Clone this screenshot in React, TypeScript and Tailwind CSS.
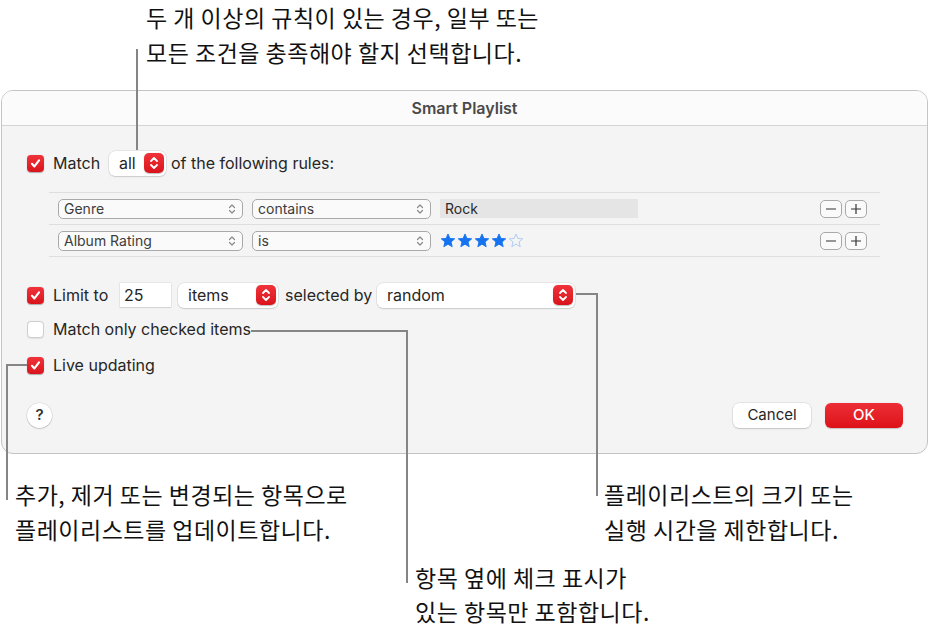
import React from 'react';

const KR = { fontFamily: '"Noto Sans CJK KR", "Noto Sans", sans-serif' };

const RedStepper = () => (
  <span className="flex h-[20px] w-[20px] items-center justify-center rounded-[5px] bg-gradient-to-b from-[#f0323a] to-[#d9121b] shadow-[0_0.5px_1px_rgba(0,0,0,0.25)]">
    <svg width="10" height="14" viewBox="0 0 10 14" fill="none" stroke="white" strokeWidth="1.8" strokeLinecap="round" strokeLinejoin="round">
      <path d="M2 5 L5 2 L8 5" />
      <path d="M2 9 L5 12 L8 9" />
    </svg>
  </span>
);

const GrayStepper = () => (
  <svg width="8" height="12" viewBox="0 0 8 12" fill="none" stroke="#8a8a8a" strokeWidth="1.2" strokeLinecap="round" strokeLinejoin="round">
    <path d="M1.5 4.5 L4 2 L6.5 4.5" />
    <path d="M1.5 7.5 L4 10 L6.5 7.5" />
  </svg>
);

const Check = ({ on }: { on: boolean }) =>
  on ? (
    <span className="flex h-[17px] w-[17px] items-center justify-center rounded-[4px] bg-gradient-to-b from-[#f0323a] to-[#d9121b] shadow-[0_0.5px_1px_rgba(0,0,0,0.3)]">
      <svg width="11" height="11" viewBox="0 0 11 11" fill="none" stroke="white" strokeWidth="2.2" strokeLinecap="round" strokeLinejoin="round">
        <path d="M2 5.8 L4.4 8.4 L9 2.4" />
      </svg>
    </span>
  ) : (
    <span className="h-[17px] w-[17px] rounded-[4px] border border-[#cfcfcf] bg-white shadow-[0_0.5px_1px_rgba(0,0,0,0.08)]" />
  );

const Select = ({ label, width }: { label: string; width: string }) => (
  <div className={`flex h-[20px] ${width} items-center justify-between rounded-[5px] border border-[#a9a9a9] bg-[#fafafa] pl-[5px] pr-[6px] text-[14px] text-[#3c3c3c]`}>
    <span>{label}</span>
    <GrayStepper />
  </div>
);

const SmallBtn = ({ kind }: { kind: 'minus' | 'plus' }) => (
  <span className="flex h-[18px] w-[22px] items-center justify-center rounded-[5px] border border-[#a9a9a9] bg-[#fafafa]">
    <svg width="12" height="12" viewBox="0 0 12 12" stroke="#333" strokeWidth="1.2">
      <path d="M1 6 H11" />
      {kind === 'plus' && <path d="M6 1 V11" />}
    </svg>
  </span>
);

const Star = ({ filled }: { filled: boolean }) => (
  <svg width="16" height="15" viewBox="0 0 24 23">
    <path
      d="M12 1.5 L14.9 8.3 L22.3 8.9 L16.7 13.7 L18.4 21 L12 17.1 L5.6 21 L7.3 13.7 L1.7 8.9 L9.1 8.3 Z"
      fill={filled ? '#1673f0' : 'none'}
      stroke={filled ? '#1673f0' : '#a9c8f3'}
      strokeWidth="1.4"
      strokeLinejoin="round"
    />
  </svg>
);

const Popup = ({ label, width }: { label: string; width: string }) => (
  <div className={`flex h-[25px] ${width} items-center justify-between rounded-[6px] bg-white pl-[10px] pr-[2px] shadow-[0_0_0_0.5px_rgba(0,0,0,0.12),0_1px_1.5px_rgba(0,0,0,0.12)]`}>
    <span>{label}</span>
    <RedStepper />
  </div>
);

export default function App() {
  return (
    <div className="relative h-[638px] w-[931px] overflow-hidden bg-white" style={{ fontFamily: 'Inter, "Liberation Sans", sans-serif' }}>
      <div className="pl-[146px] text-[23px] leading-[35px] tracking-[0.5px] text-[#111]" style={KR}>
        <p>두 개 이상의 규칙이 있는 경우, 일부 또는</p>
        <p>모든 조건을 충족해야 할지 선택합니다.</p>
      </div>

      <div className="ml-[1px] mt-[20px] h-[364px] w-[927px] overflow-hidden rounded-[12px] border border-[#c4c4c4] bg-[#f4f4f4]">
        <div className="flex h-[35px] items-center justify-center border-b border-[#d4d4d4] bg-[#fbfbfb] text-[16px] font-semibold text-[#4a4a4a]">
          Smart Playlist
        </div>

        <div className="pl-[25px] text-[16px] text-[#262626]">
          <div className="mt-[24px] flex h-[26px] items-center">
            <Check on />
            <span className="ml-[9px] w-[47px] whitespace-nowrap">Match</span>
            <div className="ml-[9px]">
              <Popup label="all" width="w-[57px]" />
            </div>
            <span className="ml-[5px] whitespace-nowrap">of the following rules:</span>
          </div>

          <div className="ml-[22px] mt-[16px] w-[831px] border-t border-[#dedede]">
            <div className="flex h-[32px] items-center border-b border-[#dedede] pl-[9px] pr-[13px]">
              <Select label="Genre" width="w-[185px]" />
              <div className="ml-[9px]">
                <Select label="contains" width="w-[179px]" />
              </div>
              <div className="ml-[9px] flex h-[19px] w-[198px] items-center bg-[#e5e5e5] pl-[5px] text-[14px] text-[#2a2a2a]">Rock</div>
              <div className="ml-auto flex gap-[3px]">
                <SmallBtn kind="minus" />
                <SmallBtn kind="plus" />
              </div>
            </div>
            <div className="flex h-[32px] items-center border-b border-[#dedede] pl-[9px] pr-[13px]">
              <Select label="Album Rating" width="w-[185px]" />
              <div className="ml-[9px]">
                <Select label="is" width="w-[179px]" />
              </div>
              <div className="ml-[9px] flex items-center gap-[1px]">
                <Star filled />
                <Star filled />
                <Star filled />
                <Star filled />
                <Star filled={false} />
              </div>
              <div className="ml-auto flex gap-[3px]">
                <SmallBtn kind="minus" />
                <SmallBtn kind="plus" />
              </div>
            </div>
          </div>

          <div className="mt-[25px] flex h-[26px] items-center">
            <Check on />
            <span className="ml-[9px] w-[59px] whitespace-nowrap">Limit to</span>
            <div className="ml-[8px] flex h-[24px] w-[51px] items-center bg-white pl-[4px] shadow-[0_0_0_0.5px_rgba(0,0,0,0.1),0_1px_1px_rgba(0,0,0,0.08)]">25</div>
            <div className="ml-[7px]">
              <Popup label="items" width="w-[100px]" />
            </div>
            <span className="ml-[7px] w-[85px] whitespace-nowrap">selected by</span>
            <div className="ml-[7px]">
              <Popup label="random" width="w-[198px]" />
            </div>
          </div>

          <div className="mt-[11px] flex h-[20px] items-center">
            <Check on={false} />
            <span className="ml-[9px]">Match only checked items</span>
          </div>

          <div className="mt-[16px] flex h-[20px] items-center">
            <Check on />
            <span className="ml-[9px]">Live updating</span>
          </div>

          <div className="mt-[27px] flex h-[26px] items-center pr-[24px]">
            <span className="flex h-[25px] w-[25px] items-center justify-center rounded-full bg-white text-[15px] font-semibold text-[#333] shadow-[0_0_0_0.5px_rgba(0,0,0,0.12),0_1px_1.5px_rgba(0,0,0,0.15)]">?</span>
            <div className="ml-auto flex gap-[14px] text-[15px]">
              <button className="h-[25px] w-[78px] rounded-[6px] bg-white text-[#262626] shadow-[0_0_0_0.5px_rgba(0,0,0,0.12),0_1px_1.5px_rgba(0,0,0,0.15)]">Cancel</button>
              <button className="h-[25px] w-[78px] rounded-[6px] bg-gradient-to-b from-[#ec2d35] to-[#de0f17] font-medium text-white shadow-[0_0.5px_1px_rgba(0,0,0,0.2)]">OK</button>
            </div>
          </div>
        </div>
      </div>

      <div className="absolute left-[15px] top-[477px] text-[23px] leading-[35px] tracking-[0.5px] text-[#111]" style={KR}>
        <p>추가, 제거 또는 변경되는 항목으로</p>
        <p>플레이리스트를 업데이트합니다.</p>
      </div>
      <div className="absolute left-[604px] top-[477px] text-[23px] leading-[35px] tracking-[0.5px] text-[#111]" style={KR}>
        <p>플레이리스트의 크기 또는</p>
        <p>실행 시간을 제한합니다.</p>
      </div>
      <div className="absolute left-[415px] top-[560px] text-[23px] leading-[34px] tracking-[0.5px] text-[#111]" style={KR}>
        <p>항목 옆에 체크 표시가</p>
        <p>있는 항목만 포함합니다.</p>
      </div>

      <svg className="pointer-events-none absolute inset-0" width="931" height="638" fill="none" stroke="#858585" strokeWidth="2">
        <path d="M137 49 V150" />
        <path d="M27 365 H7 V500" />
        <path d="M251 331 H407 V583" />
        <path d="M576 294 H597 V496" />
      </svg>
    </div>
  );
}
